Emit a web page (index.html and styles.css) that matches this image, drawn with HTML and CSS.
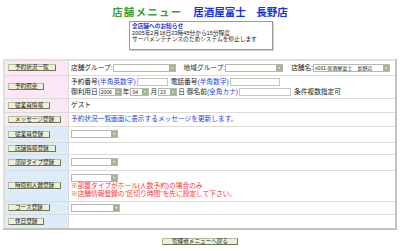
FILE: index.html
```html
<!DOCTYPE html>
<html lang="ja">
<head>
    <meta charset="UTF-8">
    <meta name="viewport" content="width=device-width, initial-scale=1.0">
    <title>店舗メニュー</title>
    <link rel="stylesheet" href="styles.css">
</head>
<body>
    <div class="head">
        <h1 class="title"><span class="menu">店舗メニュー</span><span class="shop">居酒屋富士　長野店</span></h1>
        <div class="notice">
            <div class="notice-title">全店舗へのお知らせ</div>
            <div>2005年2月18日23時45分から15分程度</div>
            <div>サーバメンテナンスのためシステムを停止します</div>
        </div>
    </div>

    <table class="board">
        <tr class="r-list">
            <td class="label"><button class="btn">予約状況一覧</button></td>
            <td>
                <div class="line">
                    店舗グループ:<span class="sel group"><span class="val"></span><span class="arrow"></span></span>
                    <span class="gap">地域グループ:</span><span class="sel area"><span class="val"></span><span class="arrow"></span></span>
                    <span class="gap">店舗名:</span><span class="sel shopname"><span class="val">s001:居酒屋富士　長野店</span><span class="arrow"></span></span>
                </div>
            </td>
        </tr>
        <tr class="r-search">
            <td class="label"><button class="btn">予約照会</button></td>
            <td>
                <div class="line">
                    予約番号<span class="link">(半角英数字)</span><input type="text" class="field num">
                    <span class="gap-s">電話番号</span><span class="link">(半角数字)</span><input type="text" class="field tel">
                </div>
                <div class="line">
                    御利用日<span class="sel year"><span class="val">2006</span><span class="arrow"></span></span>年<span class="sel day"><span class="val">04</span><span class="arrow"></span></span>月<span class="sel day"><span class="val">23</span><span class="arrow"></span></span>日
                    <span class="gap-s">御名前</span><span class="link">(全角カナ)</span><input type="text" class="field name">
                    <span class="gap-s">条件複数指定可</span>
                </div>
            </td>
        </tr>
        <tr class="r-info">
            <td class="label"><button class="btn">従業員情報</button></td>
            <td>ゲスト</td>
        </tr>
        <tr class="r-msg">
            <td class="label"><button class="btn">メッセージ登録</button></td>
            <td class="link">予約状況一覧画面に表示するメッセージを更新します。</td>
        </tr>
        <tr class="r-staff admin">
            <td class="label"><button class="btn">従業員登録</button></td>
            <td><span class="sel item"><span class="val"></span><span class="arrow"></span></span></td>
        </tr>
        <tr class="r-shop admin">
            <td class="label"><button class="btn">店舗情報登録</button></td>
            <td></td>
        </tr>
        <tr class="r-room admin">
            <td class="label"><button class="btn">部屋タイプ登録</button></td>
            <td><span class="sel item"><span class="val"></span><span class="arrow"></span></span></td>
        </tr>
        <tr class="r-hour admin">
            <td class="label"><button class="btn">時間別人数登録</button></td>
            <td>
                <span class="sel item"><span class="val"></span><span class="arrow"></span></span>
                <div class="warn">※部屋タイプがホール(人数予約)の場合のみ</div>
                <div class="warn">※店舗情報登録の"区切り時間"を先に設定して下さい。</div>
            </td>
        </tr>
        <tr class="r-course admin">
            <td class="label"><button class="btn">コース登録</button></td>
            <td><span class="sel course"><span class="val"></span><span class="arrow"></span></span></td>
        </tr>
        <tr class="r-holiday admin">
            <td class="label"><button class="btn">休日登録</button></td>
            <td></td>
        </tr>
    </table>

    <div class="foot">
        <button class="btn back">管理者メニューへ戻る</button>
    </div>
</body>
</html>
```

FILE: styles.css
```css
:root{
    --green:      rgb(60, 160, 50);
    --blue:       rgb(20, 50, 230);
    --link:       rgb(40, 70, 220);
    --warn:       rgb(255, 50, 50);
    --pink:       rgb(251, 231, 247);
    --sky:        rgb(220, 236, 250);
    --line:       rgb(221, 219, 213);
    --btnFace:    rgb(238, 240, 216);
    --arrow:      rgb(163, 179, 149);
}

body {
    margin: 0;
    font-family: "Liberation Sans", "Noto Sans CJK JP", sans-serif;
    color: #222;
    background: #fff;
}

.head {
    padding-top: 5px;
}

.title {
    margin: 0;
    text-align: center;
    font-family: "Noto Sans CJK JP", sans-serif;
    font-size: 10.5px;
    line-height: 14px;
    font-weight: bold;
}

.title .menu {
    color: var(--green);
    letter-spacing: 1.2px;
}

.title .shop {
    color: var(--blue);
    margin-left: 11px;
}

.notice {
    width: 138px;
    height: 25px;
    margin: 2px auto 0;
    padding: 1px 2px;
    border: 1px solid #9c9c94;
    box-shadow: 1px 1px 0 #d2d2ca;
    font-size: 5.7px;
    line-height: 6.5px;
    transform: translateX(1px);
}

.notice-title {
    color: var(--blue);
    font-weight: bold;
}

.board {
    width: 394px;
    margin: 9px 3px 0;
    border-collapse: collapse;
    border: 2px solid;
    border-color: #e2e0da #c4c2bc #c4c2bc #e2e0da;
    font-size: 6.7px;
    line-height: 8px;
}

.board td {
    border: 1px solid var(--line);
    padding: 0 2px;
    vertical-align: middle;
    white-space: nowrap;
}

.board td.label {
    width: 58px;
    padding-left: 3px;
    background: var(--pink);
}

.board tr.admin td.label {
    background: var(--sky);
}

.r-list    { height: 15px; }
.r-search  { height: 23px; }
.r-info    { height: 14px; }
.r-msg     { height: 14px; }
.r-staff   { height: 16px; }
.r-shop    { height: 12px; }
.r-room    { height: 16px; }
.r-hour    { height: 31px; }
.r-course  { height: 13px; }
.r-holiday { height: 15px; }

.line {
    display: flex;
    align-items: center;
    height: 10px;
}

.gap   { margin-left: 8px; }
.gap-s { margin-left: 2px; }

.link {
    color: var(--link);
}

.warn {
    color: var(--warn);
    line-height: 8px;
}

.btn {
    display: inline-block;
    box-sizing: border-box;
    height: 7px;
    padding: 0 6px;
    font-family: "Liberation Sans", "Noto Sans CJK JP", sans-serif;
    font-size: 5.6px;
    line-height: 5px;
    color: #222;
    background: var(--btnFace);
    border: 1px solid;
    border-color: #b6baa0 #6e7656 #6e7656 #b6baa0;
    border-radius: 1px;
    vertical-align: middle;
}

.sel {
    display: inline-flex;
    align-items: center;
    justify-content: space-between;
    box-sizing: border-box;
    height: 8px;
    border: 1px solid #b6b9ae;
    background: #fff;
    font-size: 5px;
    line-height: 6px;
    vertical-align: middle;
    overflow: hidden;
}

.sel .val {
    padding-left: 1px;
}

.sel .arrow {
    display: flex;
    align-items: center;
    justify-content: center;
    width: 6px;
    height: 6px;
    background: var(--arrow);
}

.sel .arrow::after {
    content: "";
    border-left: 1.5px solid transparent;
    border-right: 1.5px solid transparent;
    border-top: 2px solid #f4f6ee;
}

.sel.group    { width: 63px; }
.sel.area     { width: 58px; }
.sel.shopname { width: 77px; }
.sel.year     { width: 23px; margin: 0 1px; }
.sel.day      { width: 19px; margin: 0 1px; }
.sel.item     { width: 47px; }
.sel.course   { width: 49px; }

.field {
    box-sizing: border-box;
    height: 8px;
    padding: 0;
    margin: 0 1px;
    border: 1px solid #c4c4bc;
    background: #fff;
}

.field.num  { width: 31px; }
.field.tel  { width: 50px; }
.field.name { width: 52px; }

.foot {
    display: flex;
    justify-content: center;
    margin-top: 8px;
}

.btn.back {
    padding: 0 9px;
}
```
